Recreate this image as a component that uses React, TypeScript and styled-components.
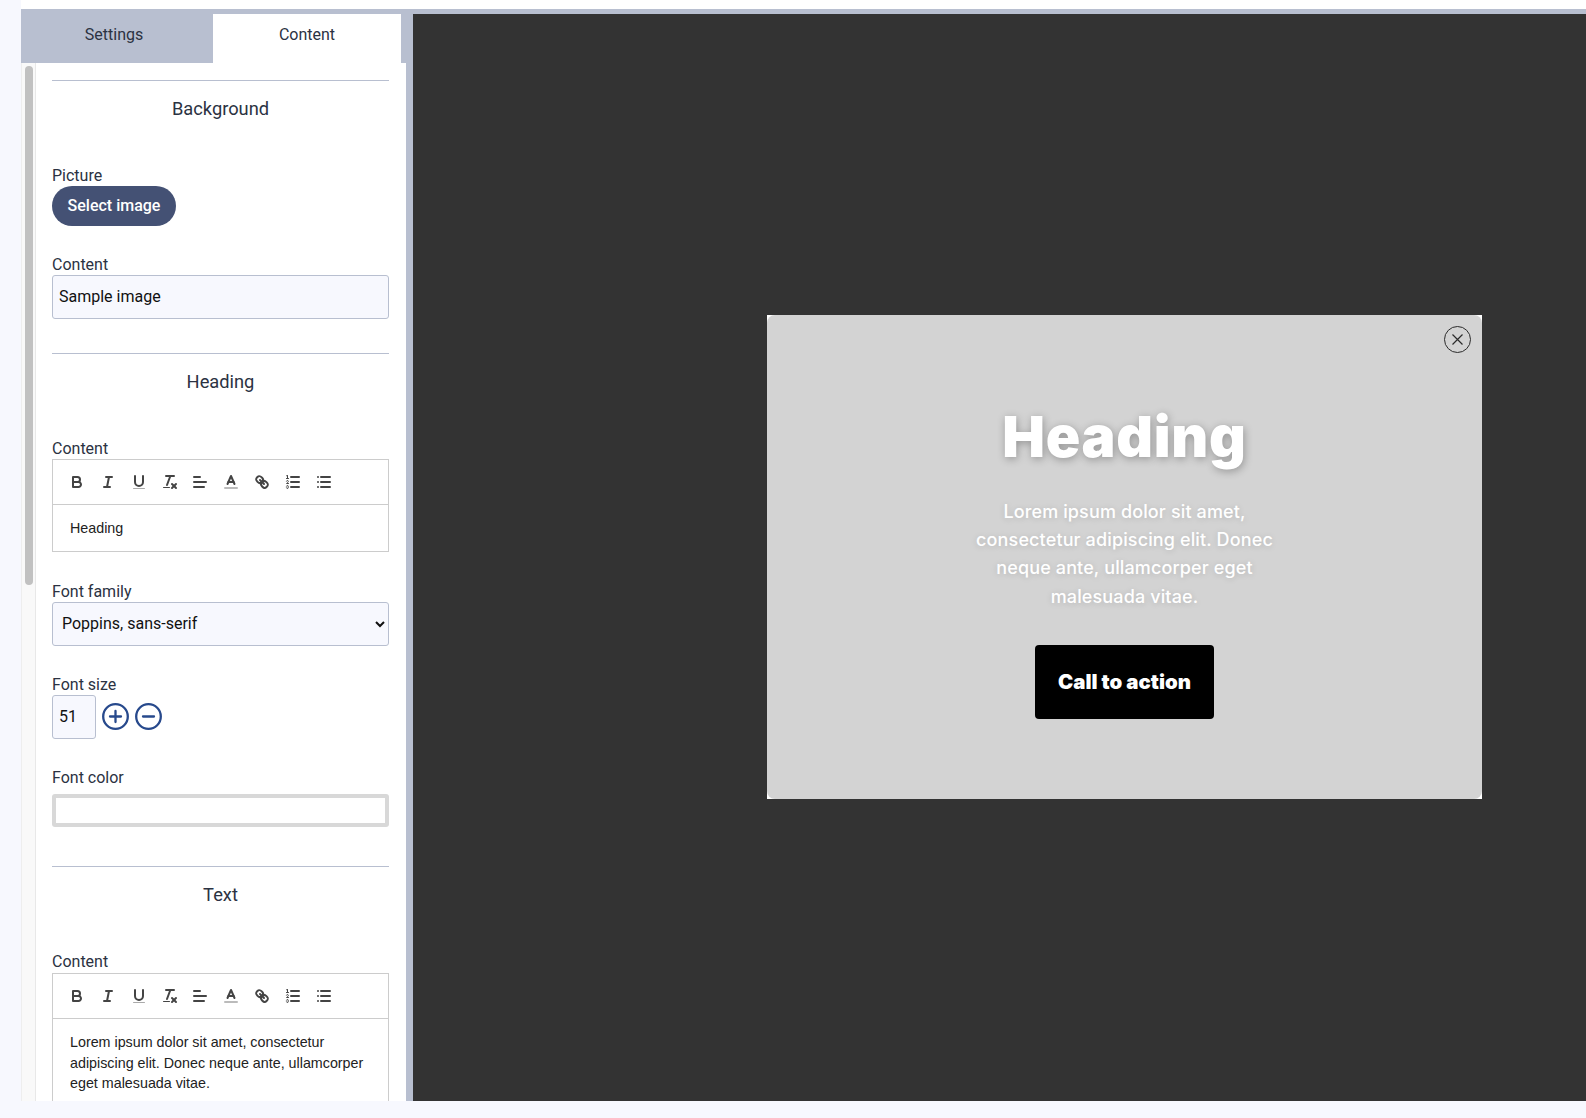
import React from "react";
import styled, { createGlobalStyle } from "styled-components";

const Global = createGlobalStyle`
  html, body { margin: 0; padding: 0; height: 100%; overflow: hidden; background: #f7f8fe; }
  * { box-sizing: border-box; }
  body { font-family: Roboto, "Noto Sans", sans-serif; color: #2b3242; }
`;

const Page = styled.div`
  margin-left: 21px;
  height: 1101px;
  padding-top: 9px;
  background: #fff;
  display: flex;
  flex-direction: column;
  overflow: hidden;
`;
const Workspace = styled.div`
  flex: 1;
  min-height: 0;
  border-top: 5px solid #b8bfd0;
  display: flex;
`;
const Sidebar = styled.aside`
  width: 392px;
  flex: none;
  background: #b8bfd0;
  display: flex;
  flex-direction: column;
  min-height: 0;
`;
const Tabs = styled.div`
  display: flex;
  height: 49px;
  flex: none;
`;
const Tab = styled.div<{ $active?: boolean; $w: number; $shift?: number }>`
  width: ${(p) => p.$w}px;
  display: flex;
  align-items: center;
  justify-content: center;
  padding-bottom: 8px;
  padding-right: ${(p) => p.$shift ?? 0}px;
  font-size: 16px;
  background: ${(p) => (p.$active ? "#fff" : "transparent")};
  color: #2b3242;
`;
const SideBody = styled.div`
  flex: 1;
  min-height: 0;
  display: flex;
  margin-right: 7px;
  background: #fff;
`;
const Track = styled.div`
  width: 15px;
  flex: none;
  background: #f9f9f9;
  border-left: 1px solid #eee;
  border-right: 1px solid #e8e8e8;
  padding: 3px 2px 0 3px;
`;
const Thumb = styled.div`
  width: 8px;
  height: 519px;
  border-radius: 4px;
  background: #c1c1c1;
`;
const Form = styled.div`
  flex: 1;
  min-width: 0;
  padding: 17px 17px 0 16px;
  overflow: hidden;
`;
const Section = styled.section<{ $gap?: number }>`
  border-top: 1px solid #b8bfd0;
  margin-top: ${(p) => p.$gap ?? 0}px;
`;
const SectionTitle = styled.h3`
  margin: 15px 0 45px;
  height: 24px;
  line-height: 25px;
  font-size: 18.3px;
  font-weight: 400;
  text-align: center;
  color: #2b3242;
`;
const Field = styled.div<{ $gap?: number }>`
  margin-top: ${(p) => p.$gap ?? 0}px;
`;
const Label = styled.label<{ $mb?: number }>`
  display: block;
  height: 20px;
  line-height: 22px;
  font-size: 16px;
  margin-bottom: ${(p) => p.$mb ?? 1}px;
  color: #2b3242;
`;
const PillButton = styled.button`
  display: block;
  width: 124px;
  height: 40px;
  border: 0;
  border-radius: 20px;
  background: #445174;
  color: #fff;
  font: 500 16px Roboto, sans-serif;
  padding: 0 0 2px;
`;
const TextInput = styled.input<{ $w?: number }>`
  display: block;
  width: ${(p) => (p.$w ? `${p.$w}px` : "100%")};
  height: 44px;
  padding: 0 5px 2px 6px;
  border: 1px solid #b8bfd0;
  border-radius: 3px;
  background: #f7f8fe;
  color: #111;
  font: 400 16px Roboto, sans-serif;
  outline: 0;
`;
const Select = styled.select`
  display: block;
  width: 100%;
  height: 44px;
  padding: 0 5px 2px;
  border: 1px solid #b8bfd0;
  border-radius: 3px;
  background: #f7f8fe;
  color: #111;
  font: 400 16px Roboto, sans-serif;
`;
const Stepper = styled.div`
  display: flex;
  align-items: center;
  gap: 6px;
`;
const RoundSvg = styled.svg`
  display: block;
  margin-top: -1px;
  fill: none;
  stroke: #27498c;
  stroke-width: 2.3;
  stroke-linecap: round;
`;
const ColorBox = styled.div`
  height: 33px;
  border: 4px solid #d8d8d8;
  border-radius: 3px;
  background: #fff;
`;
const Editor = styled.div`
  border: 1px solid #ccc;
`;
const Toolbar = styled.div`
  height: 45px;
  display: flex;
  align-items: center;
  gap: 2.85px;
  padding: 0 0 0 10px;
  border-bottom: 1px solid #ccc;
`;
const ToolIcon = styled.span`
  width: 28px;
  height: 24px;
  display: flex;
  align-items: center;
  justify-content: center;
  svg { width: 18px; height: 18px; fill: none; stroke: #444; stroke-width: 2; stroke-linecap: round; stroke-linejoin: round; }
  .thin { stroke-width: 1; }
  .fill { fill: #444; stroke: none; }
  .label { stroke: #bbb; }
  .labelfill { fill: #aaa; stroke: none; }
`;
const EditorBody = styled.div`
  padding: 13px 15px 13px 17px;
  font: 400 14.3px/20.4px "Liberation Sans", Arial, sans-serif;
  color: #222;
`;
const Preview = styled.main`
  flex: 1;
  min-width: 0;
  background: #333;
  display: flex;
  align-items: center;
  justify-content: flex-end;
  padding: 0 104px 2px 0;
`;
const Modal = styled.div`
  width: 715px;
  height: 484px;
  background: #fff;
`;
const ModalInner = styled.div`
  position: relative;
  height: 100%;
  background: #d3d3d3;
  border-radius: 8px;
  display: flex;
  flex-direction: column;
  align-items: center;
  padding-top: 94px;
`;
const CloseButton = styled.div`
  position: absolute;
  top: 11px;
  right: 11px;
  width: 27px;
  height: 27px;
  svg { display: block; fill: none; stroke: #2b2b2b; }
`;
const ModalHeading = styled.h1`
  margin: 0;
  font: 900 57px/55px Inter, sans-serif;
  letter-spacing: 0.7px;
  color: #fff;
  text-shadow: 1px 2px 8px rgba(0, 0, 0, 0.3);
`;
const ModalText = styled.p`
  width: 330px;
  margin: 34px 0 34px;
  text-align: center;
  font: 500 18px/28.4px Inter, sans-serif;
  letter-spacing: 0.13px;
  color: #fff;
  text-shadow: 0 1px 6px rgba(0, 0, 0, 0.15);
`;
const CtaButton = styled.div`
  width: 179px;
  height: 74px;
  border-radius: 4px;
  background: #000;
  color: #fff;
  font: 900 20.4px Inter, sans-serif;
  padding-bottom: 2px;
  display: flex;
  align-items: center;
  justify-content: center;
`;

const tools: React.ReactNode[] = [
  <svg viewBox="0 0 18 18" key="b"><path d="M5,4H9.5A2.5,2.5,0,0,1,12,6.5v0A2.5,2.5,0,0,1,9.5,9H5A0,0,0,0,1,5,9V4A0,0,0,0,1,5,4Z" /><path d="M5,9h5.5A2.5,2.5,0,0,1,13,11.5v0A2.5,2.5,0,0,1,10.5,14H5a0,0,0,0,1,0,0V9A0,0,0,0,1,5,9Z" /></svg>,
  <svg viewBox="0 0 18 18" key="i"><line x1="7" x2="13" y1="4" y2="4" /><line x1="5" x2="11" y1="14" y2="14" /><line x1="8" x2="10" y1="14" y2="4" /></svg>,
  <svg viewBox="0 0 18 18" key="u"><path d="M5,3V9a4.012,4.012,0,0,0,4,4H9a4.012,4.012,0,0,0,4-4V3" /><rect className="labelfill" height="1" rx=".5" ry=".5" width="12" x="3" y="15" /></svg>,
  <svg viewBox="0 0 18 18" key="c"><line x1="5" x2="13" y1="3" y2="3" /><line x1="6" x2="9.35" y1="12" y2="3" /><line x1="11" x2="15" y1="11" y2="15" /><line x1="15" x2="11" y1="11" y2="15" /><rect className="fill" height="1" rx=".5" ry=".5" width="7" x="2" y="14" /></svg>,
  <svg viewBox="0 0 18 18" key="a"><line x1="3" x2="15" y1="9" y2="9" /><line x1="3" x2="13" y1="14" y2="14" /><line x1="3" x2="9" y1="4" y2="4" /></svg>,
  <svg viewBox="0 0 18 18" key="k"><line className="label" x1="3" x2="15" y1="15" y2="15" /><polyline points="5.5 11 9 3 12.5 11" /><line x1="11.63" x2="6.38" y1="9" y2="9" /></svg>,
  <svg viewBox="0 0 18 18" key="l"><line x1="7" x2="11" y1="7" y2="11" /><path d="M8.9,4.577a3.476,3.476,0,0,1,.36,4.679A3.476,3.476,0,0,1,4.577,8.9C3.185,7.5,2.035,6.4,4.217,4.217S7.5,3.185,8.9,4.577Z" /><path d="M13.423,9.1a3.476,3.476,0,0,0-4.679-.36,3.476,3.476,0,0,0,.36,4.679c1.392,1.392,2.5,2.542,4.679.36S14.815,10.5,13.423,9.1Z" /></svg>,
  <svg viewBox="0 0 18 18" key="o"><line x1="7" x2="15" y1="4" y2="4" /><line x1="7" x2="15" y1="9" y2="9" /><line x1="7" x2="15" y1="14" y2="14" /><line className="thin" x1="2.5" x2="4.5" y1="5.5" y2="5.5" /><path className="fill" d="M3.5,6A0.5,0.5,0,0,1,3,5.5V3.085l-0.276.138A0.5,0.5,0,0,1,2.053,3c-0.124-.247-0.023-0.324.224-0.447l1-.5A0.5,0.5,0,0,1,4,2.5v3A0.5,0.5,0,0,1,3.5,6Z" /><path className="thin" d="M4.5,10.5h-2c0-.234,1.85-1.076,1.85-2.234A0.959,0.959,0,0,0,2.5,8.156" /><path className="thin" d="M2.5,14.846a0.959,0.959,0,0,0,1.85-.109A0.7,0.7,0,0,0,3.75,14a0.688,0.688,0,0,0,.6-0.736,0.959,0.959,0,0,0-1.85-.109" /></svg>,
  <svg viewBox="0 0 18 18" key="ul"><line x1="6" x2="15" y1="4" y2="4" /><line x1="6" x2="15" y1="9" y2="9" /><line x1="6" x2="15" y1="14" y2="14" /><line x1="3" x2="3" y1="4" y2="4" /><line x1="3" x2="3" y1="9" y2="9" /><line x1="3" x2="3" y1="14" y2="14" /></svg>,
];

const RichEditor = ({ children }: { children: React.ReactNode }) => (
  <Editor>
    <Toolbar>
      {tools.map((t, i) => (
        <ToolIcon key={i}>{t}</ToolIcon>
      ))}
    </Toolbar>
    <EditorBody>{children}</EditorBody>
  </Editor>
);

const RoundIcon = ({ plus }: { plus?: boolean }) => (
  <RoundSvg width="27" height="27" viewBox="0 0 27 27">
    <circle cx="13.5" cy="13.5" r="12.3" />
    <line x1="8" x2="19" y1="13.5" y2="13.5" />
    {plus && <line x1="13.5" x2="13.5" y1="8" y2="19" />}
  </RoundSvg>
);

export default function App() {
  return (
    <Page>
      <Global />
      <Workspace>
        <Sidebar>
          <Tabs>
            <Tab $w={192} $shift={6}>Settings</Tab>
            <Tab $w={188} $active>Content</Tab>
          </Tabs>
          <SideBody>
            <Track><Thumb /></Track>
            <Form>
              <Section>
                <SectionTitle>Background</SectionTitle>
                <Field>
                  <Label>Picture</Label>
                  <PillButton>Select image</PillButton>
                </Field>
                <Field $gap={28}>
                  <Label>Content</Label>
                  <TextInput readOnly value="Sample image" />
                </Field>
              </Section>
              <Section $gap={34}>
                <SectionTitle>Heading</SectionTitle>
                <Field>
                  <Label>Content</Label>
                  <RichEditor>Heading</RichEditor>
                </Field>
                <Field $gap={29}>
                  <Label>Font family</Label>
                  <Select defaultValue="Poppins, sans-serif">
                    <option>Poppins, sans-serif</option>
                  </Select>
                </Field>
                <Field $gap={28}>
                  <Label>Font size</Label>
                  <Stepper>
                    <TextInput $w={44} readOnly value="51" />
                    <RoundIcon plus />
                    <RoundIcon />
                  </Stepper>
                </Field>
                <Field $gap={28}>
                  <Label $mb={7}>Font color</Label>
                  <ColorBox />
                </Field>
              </Section>
              <Section $gap={39}>
                <SectionTitle>Text</SectionTitle>
                <Field $gap={1}>
                  <Label $mb={2}>Content</Label>
                  <RichEditor>
                    Lorem ipsum dolor sit amet, consectetur adipiscing elit. Donec neque ante, ullamcorper eget malesuada vitae.
                  </RichEditor>
                </Field>
              </Section>
            </Form>
          </SideBody>
        </Sidebar>
        <Preview>
          <Modal>
            <ModalInner>
              <CloseButton>
                <svg width="27" height="27" viewBox="0 0 27 27">
                  <circle cx="13.5" cy="13.5" r="13" />
                  <path d="M8.5 8.5l10 10M18.5 8.5l-10 10" strokeWidth="1.2" />
                </svg>
              </CloseButton>
              <ModalHeading>Heading</ModalHeading>
              <ModalText>Lorem ipsum dolor sit amet, consectetur adipiscing elit. Donec neque ante, ullamcorper eget malesuada vitae.</ModalText>
              <CtaButton>Call to action</CtaButton>
            </ModalInner>
          </Modal>
        </Preview>
      </Workspace>
    </Page>
  );
}
